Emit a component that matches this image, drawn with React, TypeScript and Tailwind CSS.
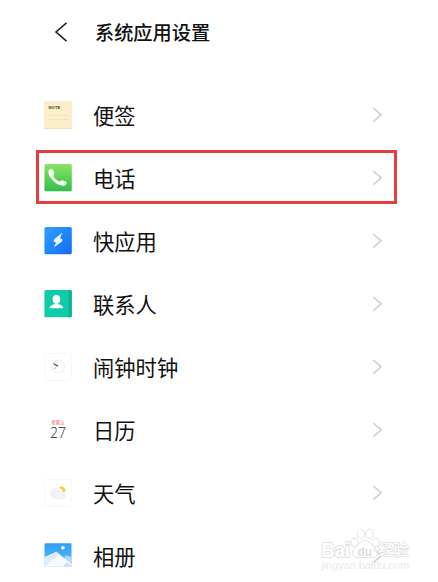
import type { ReactNode } from "react";

interface AppRow {
  name: string;
  icon: ReactNode;
  highlighted?: boolean;
}

function NoteIcon() {
  return (
    <svg className="h-7 w-7" viewBox="0 0 28 28">
      <rect x="0" y="0" width="28" height="28" rx="1" fill="#fdeecb" />
      <path d="M0 27.5h28" stroke="#f3dfb6" />
      <path d="M4 14.5h20M4 18.5h20" stroke="#f3dfb8" strokeWidth="0.8" />
      <text x="4.6" y="8" fontSize="4.2" fontWeight="700" fontFamily="Liberation Sans, sans-serif" fill="#4a4030">
        NOTE
      </text>
    </svg>
  );
}

function PhoneIcon() {
  return (
    <svg className="h-7 w-7" viewBox="0 0 28 28">
      <defs>
        <linearGradient id="phone" x1="0" y1="0" x2="0" y2="1">
          <stop offset="0" stopColor="#8ae562" />
          <stop offset="1" stopColor="#2fbf4a" />
        </linearGradient>
      </defs>
      <rect x=".4" width="27.4" height="27.3" rx="1.5" fill="url(#phone)" />
      <path
        d="M5.4 5.5C6.8 4.1 8.6 4.6 9.2 6.2L10.2 8.8C10.6 10.2 9.3 10.9 9.4 12C9.7 13.8 13.7 17.3 15.4 17.4C16.7 17.4 17.4 16.1 18.7 16.4L21.6 17.3C23.2 18 23.1 19.6 21.8 20.8C19.8 22.5 15.8 21.7 11.8 18.9C7.7 16 4.8 11.8 4.4 8.6C4.3 7.3 4.6 6.3 5.4 5.5Z"
        fill="#fff"
      />
    </svg>
  );
}

function QuickAppIcon() {
  return (
    <svg className="h-7 w-7" viewBox="0 0 28 28">
      <defs>
        <linearGradient id="quick" x1="0" y1="0" x2="1" y2="1">
          <stop offset="0" stopColor="#2ca3ff" />
          <stop offset="1" stopColor="#136bf5" />
        </linearGradient>
      </defs>
      <rect x=".4" width="27.4" height="27.3" rx="1.5" fill="url(#quick)" />
      <path d="M18.3 5.5L9.7 12.7L9.9 15L12.2 15.4L9.4 20.8L18.2 14.2L18.4 12L16 11.6Z" fill="#e6f4ff" />
    </svg>
  );
}

function ContactsIcon() {
  return (
    <svg className="h-7 w-7" viewBox="0 0 28 28">
      <rect x=".4" width="27.4" height="27.3" rx="1.5" fill="#0fcba8" />
      <path d="M24.5 0h1.8a1.5 1.5 0 0 1 1.5 1.5v24.3a1.5 1.5 0 0 1-1.5 1.5h-1.8z" fill="#0eb394" />
      <ellipse cx="12.4" cy="9.2" rx="3.8" ry="4.3" fill="#fff" />
      <path d="M10.6 12h3.6v2.2c3.3.5 5 1.8 5 4.1H5.6c0-2.300 1.700-3.600 5-4.100z" fill="#fff" />
    </svg>
  );
}

function ClockIcon() {
  return (
    <svg className="h-7 w-7" viewBox="0 0 28 28">
      <rect x=".5" y=".5" width="27" height="27" rx="1" fill="#fff" stroke="#f6f6f6" />
      <circle cx="14.3" cy="13.5" r="6.3" fill="#fefefe" stroke="#f3f3f3" strokeWidth="1.6" />
      <path d="M9.5 10.6L14 13.3" stroke="#333" strokeWidth="1.1" />
      <path d="M14 13.3L8 17.3" stroke="#888" strokeWidth=".8" strokeDasharray="2 2.5" strokeDashoffset="2" />
    </svg>
  );
}

function CalendarIcon() {
  return (
    <svg className="h-7 w-7" viewBox="0 0 28 28">
      <text
        x="7.5"
        y="7.5"
        textLength="13"
        lengthAdjust="spacingAndGlyphs"
        fontSize="4.5"
        fontFamily="Noto Sans CJK SC, sans-serif"
        fill="#ea6262"
      >
        星期五
      </text>
      <text
        x="5.9"
        y="22.3"
        textLength="16"
        lengthAdjust="spacingAndGlyphs"
        fontSize="15"
        fontFamily="Open Sans, sans-serif"
        fontWeight="300"
        fill="#222"
      >
        27
      </text>
    </svg>
  );
}

function WeatherIcon() {
  return (
    <svg className="h-7 w-7" viewBox="0 0 28 28">
      <rect x=".5" y=".5" width="27" height="27" rx="1" fill="#fff" stroke="#f6f6f6" />
      <path
        d="M10.5 20a5.500 5.500 0 0 1-4.500-5.500 5.300 5.300 0 0 1 9.500-3.500 5 5 0 0 1 6 4 3 3 0 0 1-2 5z"
        fill="#f1f2f7"
      />
      <path d="M15.500 8c3-1 6.500 1 6 4.300l-2.200 1c-.3-2.300-1.700-3.600-4-4z" fill="#f0d21c" />
    </svg>
  );
}

function AlbumIcon() {
  return (
    <svg className="h-7 w-7" viewBox="0 0 28 28">
      <defs>
        <linearGradient id="album" x1="0" y1="0" x2="0" y2="1">
          <stop offset="0" stopColor="#2f9ef6" />
          <stop offset="1" stopColor="#62bbfb" />
        </linearGradient>
      </defs>
      <g transform="translate(0 .8)">
        <path d="M1.500 .4h25a1 1 0 0 1 1 1v22.600H.5V1.400a1 1 0 0 1 1-1z" fill="url(#album)" />
        <path d="M27.500 14.500L22 12.500l-6 8v3.500h11.500z" fill="#b5d9fd" />
        <path d="M.5 14.500L12.500 9l15 12.500V24H.5z" fill="#f7faff" />
        <path d="M.5 14.500L12.500 9l2 2L11 15.500l-3 1-3.500 4.500-4 2z" fill="#dcebfe" />
        <path d="M19 24l3.500-4.500 5 3.500v1z" fill="#c6defb" />
        <circle cx="18.900" cy="4.900" r="1.800" fill="#fff" />
      </g>
    </svg>
  );
}

function Chevron() {
  return (
    <svg className="mr-px h-4 w-[11px]" viewBox="0 0 11 16" fill="none" stroke="#d0d0d2" strokeWidth="1.6">
      <path d="M1.2 1L9.200 7.800 1.200 14.600" />
    </svg>
  );
}

const rows: AppRow[] = [
  { name: "便签", icon: <NoteIcon /> },
  { name: "电话", icon: <PhoneIcon />, highlighted: true },
  { name: "快应用", icon: <QuickAppIcon /> },
  { name: "联系人", icon: <ContactsIcon /> },
  { name: "闹钟时钟", icon: <ClockIcon /> },
  { name: "日历", icon: <CalendarIcon /> },
  { name: "天气", icon: <WeatherIcon /> },
  { name: "相册", icon: <AlbumIcon /> },
];

function Watermark() {
  return (
    <svg className="absolute top-[525px] left-[318px] h-[50px] w-24" viewBox="0 0 96 50">
      <g fill="#fff" fillOpacity=".5" stroke="#e2e2e2" strokeWidth="1">
        <ellipse cx="36.500" cy="17.500" rx="3.400" ry="4.300" />
        <ellipse cx="43" cy="9" rx="3.800" ry="4.800" />
        <ellipse cx="51.500" cy="9" rx="3.800" ry="4.800" />
        <ellipse cx="58" cy="17.500" rx="3.400" ry="4.300" />
        <path d="M47 15.500c-4.500 0-6 4.500-9.500 7-5.500 4.500-3 10 2.500 10h14c5.500 0 8-5.500 2.500-10-3.500-2.500-5-7-9.500-7z" />
      </g>
      <g
        fontFamily="Liberation Sans, sans-serif"
        fontWeight="700"
        fill="#fff"
        stroke="#e0e0e0"
        strokeLinejoin="round"
        style={{ paintOrder: "stroke" }}
      >
        <text x="3.500" y="31.500" fontSize="20" strokeWidth="1.800" textLength="28.500" lengthAdjust="spacingAndGlyphs">
          Bai
        </text>
        <text
          x="39.500"
          y="30.500"
          fontSize="12.500"
          fill="#dedede"
          stroke="none"
          textLength="14.500"
          lengthAdjust="spacingAndGlyphs"
        >
          du
        </text>
        <text x="60.500" y="30" fontSize="15" strokeWidth="1.500" fontFamily="Noto Sans CJK SC, sans-serif" fontWeight="500">
          经验
        </text>
      </g>
      <text
        x="3"
        y="44"
        fontSize="11"
        fontFamily="Liberation Sans, sans-serif"
        fill="#e9e9e9"
        textLength="88"
        lengthAdjust="spacingAndGlyphs"
      >
        jingyan.baidu.com
      </text>
    </svg>
  );
}

export default function App() {
  return (
    <div className="relative h-[582px] w-[438px] overflow-hidden bg-white font-['Noto_Sans_CJK_SC',sans-serif] text-[#111]">
      {/* Header */}
      <header className="flex h-[83px] items-start pt-[17px] pl-[54px]">
        <svg className="mt-1 h-[22px] w-[15px]" viewBox="0 0 15 22" fill="none" stroke="#222" strokeWidth="1.6">
          <path d="M12.5 1.8L2 11l10.5 9.2" />
        </svg>
        <h1 className="ml-[26px] pt-px text-[19.2px] leading-7 font-medium">系统应用设置</h1>
      </header>

      {/* App list */}
      <ul>
        {rows.map((row) => (
          <li key={row.name} className="relative flex h-[63px] items-center pr-[54px] pl-11">
            {row.icon}
            <span className="ml-[21px] flex-1 text-[21.3px] leading-8">{row.name}</span>
            <Chevron />
            {row.highlighted && (
              <div className="absolute top-1 left-9 h-[54px] w-[361px] border-3 border-[#e23d3f]" />
            )}
          </li>
        ))}
      </ul>

      <Watermark />
    </div>
  );
}
